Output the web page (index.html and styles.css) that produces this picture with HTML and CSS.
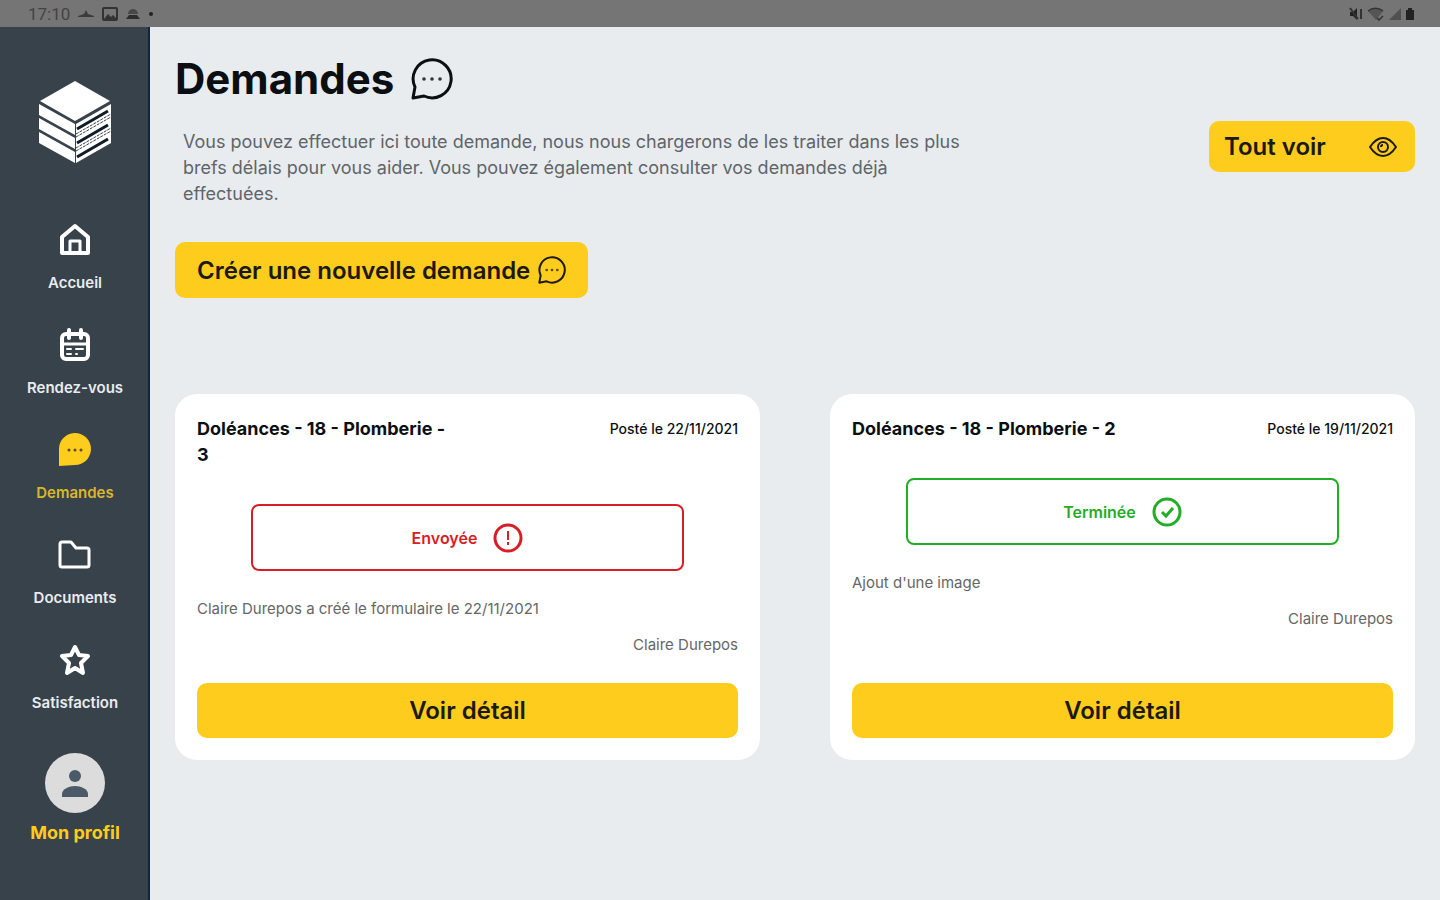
FILE: index.html
```html
<!DOCTYPE html>
<html lang="fr">
<head>
  <meta charset="UTF-8">
  <meta name="viewport" content="width=device-width, initial-scale=1">
  <title>Demandes</title>
  <link rel="stylesheet" href="styles.css">
</head>
<body>

  <div class="statusbar">
    <div class="status-left">
      <span class="time">17:10</span>
      <svg width="18" height="12" viewBox="0 0 18 12"><path d="M1 8l6-2 2-4 2 4 6 2v1H1z" fill="#3c3c3c"/></svg>
      <svg width="16" height="14" viewBox="0 0 16 14"><rect x="1" y="1" width="14" height="12" rx="1" fill="none" stroke="#333" stroke-width="2"/><path d="M2 12l4-5 3 3 2-2 4 4z" fill="#333"/></svg>
      <svg width="16" height="12" viewBox="0 0 16 12"><path d="M3 6a5 5 0 0 1 10 0z" fill="#484848"/><path d="M1 11l3-4h8l3 4z" fill="#2c2c2c"/></svg>
      <svg width="6" height="6" viewBox="0 0 6 6"><circle cx="3" cy="3" r="2" fill="#222"/></svg>
    </div>
    <div class="status-right">
      <svg width="14" height="14" viewBox="0 0 14 14"><path d="M1 5h3l4-4v12L4 9H1z" fill="#222"/><path d="M1 1l8 11M12 2v10" stroke="#333" stroke-width="2"/></svg>
      <svg width="18" height="14" viewBox="0 0 18 14"><path d="M1 4a12 12 0 0 1 15 0L9 13z" fill="#555"/><path d="M1 4a12 12 0 0 1 15 0M10 11l2 2 4-4" fill="none" stroke="#333" stroke-width="1.5"/></svg>
      <svg width="12" height="12" viewBox="0 0 12 12"><path d="M0 12L12 0v12z" fill="#505050"/></svg>
      <svg width="10" height="14" viewBox="0 0 10 14"><path d="M3 1h4v2h2v10H1V3h2z" fill="#222"/></svg>
    </div>
  </div>

  <div class="app">
    <aside class="sidebar">
      <svg class="logo" width="76" height="84" viewBox="0 0 76 84">
        <path d="M38 1L73 21 38 41 3 21z" fill="#fff"/>
        <path d="M2 24l36 20v11L2 35zM2 38l36 20v11L2 49zM2 52l36 20v11L2 63z" fill="#fff"/>
        <path d="M39 44l35-20v39L39 83z" fill="#fff"/>
        <path d="M40 49l31-18M40 63l31-18M40 77l31-18" stroke="#101c28" stroke-width="3"/>
        <path d="M39 57l35-20M39 71l35-20M39 54l35-20M39 68l35-20" stroke="#38424b" stroke-width="1" stroke-dasharray="3 1"/>
      </svg>

      <nav class="menu">
        <a href="#" class="menu-item">
          <svg width="34" height="34" viewBox="0 0 34 34" fill="none" stroke="#fff" stroke-width="4" stroke-linejoin="round"><path d="M4 14L17 3l13 11v16H4z"/><path d="M12 30V18h10v12" stroke-width="3"/></svg>
          <span>Accueil</span>
        </a>
        <a href="#" class="menu-item">
          <svg width="34" height="34" viewBox="0 0 34 34" fill="none" stroke="#fff" stroke-width="4" stroke-linejoin="round" stroke-linecap="round"><rect x="4" y="6" width="26" height="25" rx="4"/><path d="M11 2v8M23 2v8"/><path d="M4 16h26" stroke-width="3"/><path d="M9 21h4M18 21h7M9 26h4M18 26h1" stroke-width="2"/></svg>
          <span>Rendez-vous</span>
        </a>
        <a href="#" class="menu-item active">
          <svg width="34" height="34" viewBox="0 0 34 34"><path d="M1 33V17a16 16 0 1 1 16 15z" fill="#fecc1c"/><g fill="#5a4d20"><circle cx="11" cy="17" r="1.5"/><circle cx="17" cy="17" r="1.5"/><circle cx="23" cy="17" r="1.5"/></g></svg>
          <span>Demandes</span>
        </a>
        <a href="#" class="menu-item">
          <svg width="34" height="34" viewBox="0 0 34 34" fill="none" stroke="#fff" stroke-width="3" stroke-linejoin="round"><path d="M4 4h9l5 6h11a2 2 0 0 1 2 2v15a2 2 0 0 1-2 2H4a2 2 0 0 1-2-2V6a2 2 0 0 1 2-2z"/></svg>
          <span>Documents</span>
        </a>
        <a href="#" class="menu-item">
          <svg width="34" height="34" viewBox="0 0 34 34" fill="none" stroke="#fff" stroke-width="4" stroke-linejoin="round"><path d="M17 4l4 8 9 1-7 7 2 10-8-5-8 5 2-10-7-7 9-1z"/></svg>
          <span>Satisfaction</span>
        </a>
      </nav>

      <a href="#" class="profile">
        <svg width="60" height="60" viewBox="0 0 60 60"><circle cx="30" cy="30" r="30" fill="#dcdcdc"/><circle cx="30" cy="23" r="6" fill="#4b5a68"/><path d="M17 44v-3c0-5 7-8 13-8s13 3 13 8v3z" fill="#4b5a68"/></svg>
        <span>Mon profil</span>
      </a>
    </aside>

    <main class="content">
      <h1 class="title">
        Demandes
        <svg width="42" height="42" viewBox="0 0 42 42"><path d="M2 40l2-11A19 19 0 1 1 13 38z" fill="none" stroke="#0c0f12" stroke-width="3" stroke-linejoin="round"/><g fill="#333"><circle cx="13" cy="21" r="1.8"/><circle cx="21" cy="21" r="1.8"/><circle cx="29" cy="21" r="1.8"/></g></svg>
      </h1>

      <div class="intro">
        <p>Vous pouvez effectuer ici toute demande, nous nous chargerons de les traiter dans les plus brefs délais pour vous aider. Vous pouvez également consulter vos demandes déjà effectuées.</p>
        <button class="btn btn-all">
          Tout voir
          <svg width="28" height="22" viewBox="0 0 28 22" fill="none" stroke="#1c1a10" stroke-width="2"><path d="M1 11c4-6 8-9 13-9s9 3 13 9c-4 6-8 9-13 9S5 17 1 11z"/><circle cx="14" cy="11" r="5"/><path d="M12 11a2 2 0 0 1 2-2"/></svg>
        </button>
      </div>

      <button class="btn btn-new">
        Créer une nouvelle demande
        <svg width="28" height="28" viewBox="0 0 42 42"><path d="M2 40l2-11A19 19 0 1 1 13 38z" fill="none" stroke="#1c1a10" stroke-width="3" stroke-linejoin="round"/><g fill="#5a4a10"><circle cx="13" cy="21" r="2"/><circle cx="21" cy="21" r="2"/><circle cx="29" cy="21" r="2"/></g></svg>
      </button>

      <div class="cards">
        <article class="card">
          <header class="card-header">
            <h2>Doléances - 18 - Plomberie -<br>3</h2>
            <span class="date">Posté le 22/11/2021</span>
          </header>
          <div class="state sent">
            Envoyée
            <svg width="30" height="30" viewBox="0 0 30 30" fill="none" stroke="currentColor" stroke-width="3"><circle cx="15" cy="15" r="13"/><path d="M15 8v9M15 19v3" stroke-width="2"/></svg>
          </div>
          <p class="text">Claire Durepos a créé le formulaire le 22/11/2021</p>
          <p class="author">Claire Durepos</p>
          <button class="btn btn-detail">Voir détail</button>
        </article>

        <article class="card">
          <header class="card-header">
            <h2>Doléances - 18 - Plomberie - 2</h2>
            <span class="date">Posté le 19/11/2021</span>
          </header>
          <div class="state done">
            Terminée
            <svg width="30" height="30" viewBox="0 0 30 30" fill="none" stroke="currentColor" stroke-width="3"><circle cx="15" cy="15" r="13"/><path d="M10 15l4 4 7-8"/></svg>
          </div>
          <p class="text">Ajout d'une image</p>
          <p class="author">Claire Durepos</p>
          <button class="btn btn-detail">Voir détail</button>
        </article>
      </div>
    </main>
  </div>

</body>
</html>
```
FILE: styles.css
```css
* {
  box-sizing: border-box;
}

body {
  margin: 0;
  min-height: 100vh;
  display: flex;
  flex-direction: column;
  background: #e8ecef;
  color: #0c0f12;
  font-family: Inter, 'Liberation Sans', sans-serif;
}

svg {
  display: block;
  flex-shrink: 0;
}

h1, h2, p {
  margin: 0;
}

a {
  text-decoration: none;
}

.statusbar {
  display: flex;
  justify-content: space-between;
  align-items: center;
  height: 27px;
  padding: 0 25px 0 28px;
  background: #757575;
}

.status-left,
.status-right {
  display: flex;
  align-items: center;
  gap: 7px;
}

.status-right {
  gap: 4px;
}

.time {
  color: #444;
  font-family: Roboto, sans-serif;
  font-size: 17px;
}

.app {
  flex: 1;
  display: flex;
}

.sidebar {
  width: 150px;
  flex-shrink: 0;
  display: flex;
  flex-direction: column;
  align-items: center;
  padding-top: 53px;
  background: #38424b;
  box-shadow: inset -2px 0 #14243a;
}

.menu {
  display: flex;
  flex-direction: column;
  gap: 35px;
  margin-top: 59px;
}

.menu-item {
  display: flex;
  flex-direction: column;
  align-items: center;
  gap: 15px;
  color: #e8ecef;
  font-size: 15px;
  font-weight: 600;
  line-height: 21px;
}

.menu-item.active {
  color: #d8b72c;
}

.profile {
  display: flex;
  flex-direction: column;
  align-items: center;
  gap: 10px;
  margin-top: 40px;
  color: #fecc1c;
  font-size: 18px;
  font-weight: 700;
  line-height: 20px;
}

.content {
  flex: 1;
  padding: 26px 25px;
}

.title {
  display: flex;
  align-items: center;
  gap: 17px;
  font-size: 42px;
  font-weight: 700;
  line-height: 52px;
}

.intro {
  display: flex;
  justify-content: space-between;
  align-items: flex-start;
  margin-top: 16px;
}

.intro p {
  max-width: 808px;
  padding: 8px;
  color: #5f6569;
  font-size: 18px;
  line-height: 26px;
}

.btn {
  display: flex;
  align-items: center;
  border: none;
  border-radius: 10px;
  background: #fecc1c;
  color: #1c1a10;
  font-family: inherit;
  font-size: 24px;
  font-weight: 600;
  cursor: pointer;
}

.btn-all {
  justify-content: space-between;
  width: 206px;
  height: 51px;
  padding: 0 18px 0 15px;
}

.btn-new {
  gap: 8px;
  height: 56px;
  margin-top: 27px;
  padding: 0 22px;
}

.cards {
  display: grid;
  grid-template-columns: 1fr 1fr;
  gap: 70px;
  margin-top: 96px;
}

.card {
  display: flex;
  flex-direction: column;
  padding: 22px;
  border-radius: 22px;
  background: #fff;
}

.card-header {
  display: flex;
  justify-content: space-between;
  line-height: 26px;
}

.card-header h2 {
  font-size: 18px;
  font-weight: 700;
}

.date {
  font-size: 14px;
  font-weight: 500;
}

.state {
  display: flex;
  justify-content: center;
  align-items: center;
  gap: 16px;
  width: 80%;
  height: 67px;
  margin: 36px auto 25px;
  border: 2px solid;
  border-radius: 8px;
  font-size: 16px;
  font-weight: 600;
}

.sent {
  color: #d81e25;
}

.done {
  color: #1fae25;
}

.text,
.author {
  color: #666;
  font-size: 15px;
  line-height: 26px;
}

.author {
  margin: 10px 0 25px;
  text-align: right;
}

.btn-detail {
  justify-content: center;
  height: 55px;
  margin-top: auto;
}
```
